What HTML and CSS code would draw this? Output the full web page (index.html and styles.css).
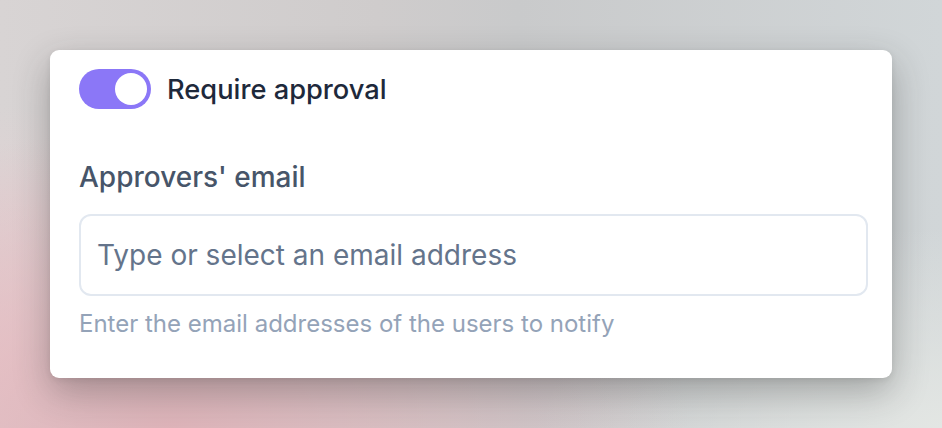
FILE: index.html
```html
<!DOCTYPE html>
<html lang="en">
<head>
<meta charset="utf-8">
<title>Require approval</title>
<link rel="stylesheet" href="styles.css">
</head>
<body>
<main class="stage">
  <section class="card">
    <div class="toggle-row">
      <span class="toggle" role="switch" aria-checked="true"><span class="knob"></span></span>
      <span class="toggle-label">Require approval</span>
    </div>
    <div class="field">
      <label class="field-label">Approvers' email</label>
      <div class="input"><span class="placeholder">Type or select an email address</span></div>
      <p class="hint">Enter the email addresses of the users to notify</p>
    </div>
  </section>
</main>
</body>
</html>
```

FILE: styles.css
```css
* { box-sizing: border-box; }
html, body { margin: 0; height: 100%; }
body {
  font-family: Inter, "Noto Sans", sans-serif;
  background:
    radial-gradient(ellipse 520px 300px at 18% 100%, rgba(222, 178, 184, 0.95), rgba(226, 186, 192, 0) 100%),
    radial-gradient(ellipse 160px 260px at 0% 85%, rgba(238, 208, 212, 0.9), rgba(238, 208, 212, 0) 100%),
    radial-gradient(ellipse 400px 200px at 100% 100%, rgba(228, 231, 228, 0.95), rgba(228, 231, 228, 0) 100%),
    linear-gradient(90deg, #d8d4d4 0%, #cfcccc 40%, #c9cacb 55%, #d1d6d8 100%);
  overflow: hidden;
}
.stage {
  width: 942px;
  height: 428px;
  padding: 50px 50px 0 50px;
}
.card {
  width: 842px;
  height: 328px;
  background: #fff;
  border-radius: 9px;
  box-shadow: 0 14px 36px rgba(40, 40, 40, 0.32), 0 2px 6px rgba(0, 0, 0, 0.08);
  padding: 19px 24px 0 29px;
  display: flex;
  flex-direction: column;
}
.toggle-row {
  display: flex;
  align-items: center;
  gap: 16px;
  height: 40px;
}
.toggle {
  width: 72px;
  height: 40px;
  border-radius: 20px;
  background: #8b77f7;
  display: flex;
  align-items: center;
  justify-content: flex-end;
  padding: 0 4px;
}
.knob {
  width: 32px;
  height: 32px;
  border-radius: 50%;
  background: #fff;
}
.toggle-label {
  font-size: 27.25px;
  font-weight: 500;
  color: #1e293b;
}
.field {
  display: flex;
  flex-direction: column;
  margin-top: 49px;
}
.field-label {
  font-size: 28px;
  line-height: 39px;
  font-weight: 500;
  color: #475569;
}
.input {
  margin-top: 17px;
  height: 82px;
  border: 2px solid #e2e8f0;
  border-radius: 12px;
  display: flex;
  align-items: center;
  padding: 0 16px;
}
.placeholder {
  font-size: 28px;
  color: #64748b;
}
.hint {
  margin: 11px 0 0 0;
  font-size: 24px;
  line-height: 34px;
  color: #94a3b8;
}
```
